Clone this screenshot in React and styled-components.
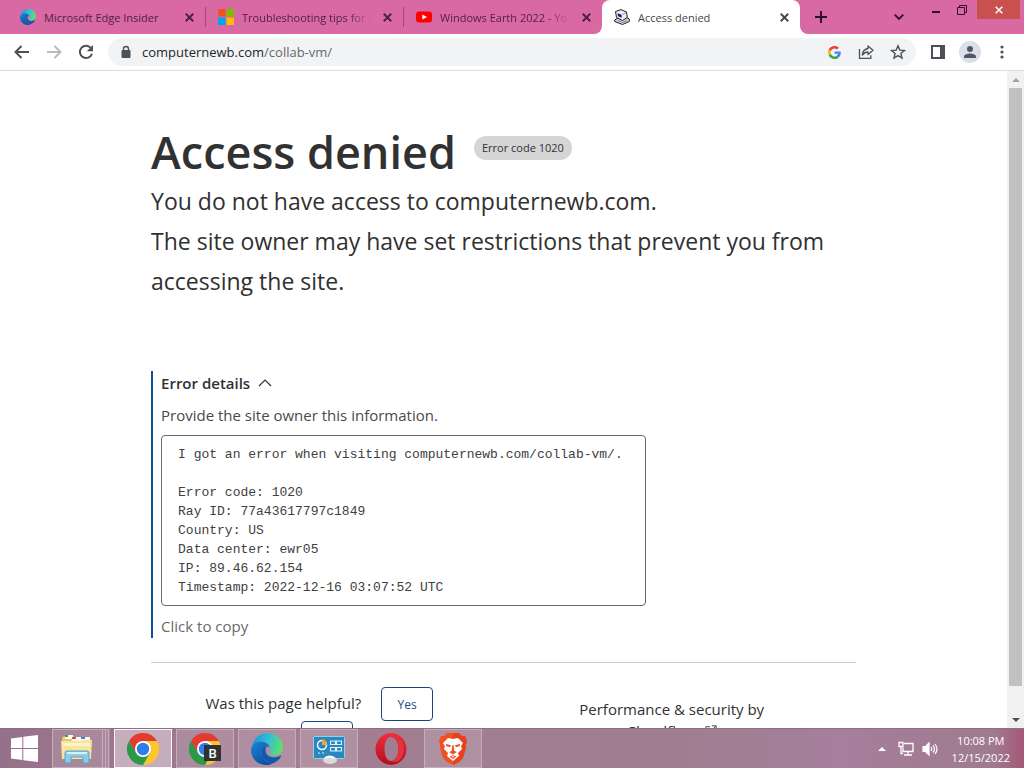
import React from "react";
import styled, { createGlobalStyle } from "styled-components";

const GlobalStyle = createGlobalStyle`
  * {
    box-sizing: border-box;
  }
  body {
    margin: 0;
    font-family: "Open Sans", "Noto Sans", sans-serif;
    color: #313131;
    background: #fff;
  }
  button {
    font: inherit;
    color: inherit;
    border: 0;
    padding: 0;
    background: none;
  }
  svg {
    display: block;
    flex: none;
  }
`;

const Desktop = styled.div`
  display: flex;
  flex-direction: column;
  height: 100vh;
  overflow: hidden;
`;

const TabStrip = styled.header`
  display: flex;
  flex: none;
  height: 34px;
  padding-left: 8px;
  background: #d869a3;
`;

const Tabs = styled.div`
  display: flex;
  flex: 0 1 792px;
  min-width: 0;
`;

const Tab = styled.div`
  display: flex;
  flex: 1;
  align-items: center;
  gap: 8px;
  min-width: 0;
  padding: 0 8px 0 12px;
  font-size: 11px;
  color: ${(p) => (p.$active ? "#45474a" : "#511f45")};
  background: ${(p) => (p.$active ? "#fff" : "#d869a3")};
  border-radius: ${(p) => (p.$active ? "8px 8px 0 0" : "0 0 8px 0")};
`;

const TabBack = styled.div`
  display: flex;
  flex: 1;
  min-width: 0;
  background: ${(p) => (p.$beforeActive ? "#fff" : "#d869a3")};
`;

const TabTitle = styled.button`
  flex: 1;
  min-width: 0;
  overflow: hidden;
  text-align: left;
  white-space: nowrap;
  mask-image: ${(p) =>
    p.$fade ? "linear-gradient(to left, transparent, #000 24px)" : "none"};
`;

const TabClose = styled.button`
  display: grid;
  place-items: center;
  width: 16px;
  height: 16px;
`;

const Divider = styled.span`
  align-self: center;
  width: 1px;
  height: 20px;
  background: #a5467e;
`;

const StripRest = styled.div`
  display: flex;
  flex: 1;
  background: #fff;
`;

const StripFill = styled.div`
  display: flex;
  flex: 1;
  justify-content: space-between;
  padding-right: 4px;
  color: #2f1029;
  background: #d869a3;
  border-radius: 0 0 0 8px;
`;

const NewTab = styled.button`
  display: grid;
  place-items: center;
  width: 42px;
`;

const WindowButtons = styled.div`
  display: flex;
  align-items: flex-start;
`;

const WindowButton = styled.button`
  display: grid;
  place-items: center;
  width: 26px;
  height: 20px;
`;

const SearchTabs = styled(WindowButton)`
  width: 48px;
  height: 34px;
`;

const CloseWindow = styled(WindowButton)`
  width: 43px;
  height: 19px;
  margin-left: 2px;
  color: #fff;
  background: #c8504f;
`;

const Toolbar = styled.nav`
  display: flex;
  flex: none;
  align-items: center;
  gap: 4px;
  height: 37px;
  padding: 0 8px;
  color: #4d5156;
  background: #fff;
  border-bottom: 1px solid #dcdcdc;
`;

const ToolButton = styled.button`
  display: grid;
  place-items: center;
  width: 28px;
  height: 28px;
  color: ${(p) => (p.$dim ? "#b9bbbd" : "inherit")};
`;

const AddressBar = styled.div`
  display: flex;
  flex: 1;
  align-items: center;
  gap: 4px;
  height: 28px;
  margin: 0 4px;
  padding: 0 4px 0 12px;
  background: #f1f3f4;
  border-radius: 14px;
`;

const Url = styled.div`
  flex: 1;
  padding-left: 6px;
  font-size: 13px;
  color: #66696d;

  b {
    font-weight: 400;
    color: #25272a;
  }
`;

const Avatar = styled.span`
  display: grid;
  place-items: center;
  width: 22px;
  height: 22px;
  border-radius: 50%;
  background: #dcdfe8;
`;

const Viewport = styled.div`
  display: flex;
  flex: 1;
  min-height: 0;
`;

const Page = styled.main`
  flex: 1;
  overflow: hidden;
`;

const Content = styled.div`
  width: 70%;
  margin: 0 auto;
  padding-top: 52px;
`;

const Heading = styled.div`
  display: flex;
  align-items: center;
  gap: 18px;
  height: 58px;
`;

const Title = styled.h1`
  margin: 0;
  font-size: 45px;
  line-height: 58px;
  font-weight: 600;
  white-space: nowrap;
`;

const Badge = styled.span`
  padding: 0 8px;
  margin-bottom: 8px;
  font-size: 11px;
  line-height: 24px;
  white-space: nowrap;
  background: #d5d5d5;
  border-radius: 12px;
`;

const Lead = styled.p`
  margin: 0;
  font-size: 23px;
  line-height: 40px;
`;

const Details = styled.section`
  margin-top: 70px;
  padding-left: 8px;
  border-left: 2px solid #0b5394;
`;

const Summary = styled.button`
  display: flex;
  align-items: center;
  gap: 8px;
  font-size: 15px;
  line-height: 24px;
  font-weight: 600;
`;

const Hint = styled.p`
  margin: 8px 0;
  font-size: 15px;
  line-height: 24px;
  color: #4a4a4a;
`;

const Report = styled.pre`
  width: fit-content;
  min-width: 485px;
  margin: 0 0 8px;
  padding: 9px 16px 8px;
  font-family: "Liberation Mono", monospace;
  font-size: 13px;
  line-height: 19px;
  color: #404040;
  border: 1px solid #6b6b6b;
  border-radius: 4px;
`;

const CopyButton = styled.button`
  display: block;
  font-size: 15px;
  line-height: 24px;
  color: #6a6a6a;
`;

const Footer = styled.footer`
  display: grid;
  grid-template-columns: 1fr 1fr;
  margin-top: 24px;
  padding-top: 24px;
  font-size: 15px;
  border-top: 1px solid #cfcfcf;
`;

const Feedback = styled.div`
  text-align: center;
  padding: 0 64px 0 48px;
`;

const Answer = styled.button`
  width: 52px;
  height: 34px;
  margin-left: 16px;
  font-size: 12px;
  color: #1d4a86;
  border: 1px solid #1c4382;
  border-radius: 4px;
`;

const Credit = styled.div`
  padding: 11px 16px 0 0;
  line-height: 22px;
  text-align: center;
`;

const CreditLink = styled.a`
  display: flex;
  justify-content: center;
  align-items: center;
  gap: 6px;
  color: inherit;
  text-decoration: none;
`;

const Scrollbar = styled.div`
  display: flex;
  flex-direction: column;
  flex: none;
  align-items: center;
  width: 17px;
  background: #f1f1f1;
`;

const ScrollArrow = styled.button`
  display: grid;
  place-items: center;
  flex: none;
  width: 17px;
  height: 17px;
  color: ${(p) => (p.$dim ? "#a3a3a3" : "#505050")};
`;

const ScrollTrack = styled.div`
  flex: 1;
  width: 13px;
`;

const ScrollThumb = styled.div`
  height: 96%;
  background: #c1c1c1;
`;

const Taskbar = styled.footer`
  display: flex;
  flex: none;
  height: 40px;
  background: linear-gradient(90deg, #96718a, #a37e92 30%, #a07e90 65%, #a57f9c 82%, #a07a8e 97%, #a45878);
  border-top: 1px solid #8d7080;
`;

const StartButton = styled.button`
  display: grid;
  place-items: center;
  width: 48px;
`;

const Apps = styled.div`
  display: flex;
  gap: 4px;
  flex: 1;
  padding-left: 4px;
`;

const AppButton = styled.button`
  display: grid;
  place-items: center;
  width: 58px;
  background: ${(p) =>
    p.$state === "active"
      ? "#c5aebc"
      : p.$state === "idle"
        ? "none"
        : "rgba(255, 255, 255, 0.14)"};
  border: 1px solid
    ${(p) =>
      p.$state === "active"
        ? "#fbf4f8"
        : p.$state === "idle"
          ? "transparent"
          : "#c6adbb"};
`;

const StackedApp = styled(AppButton)`
  padding-right: 8px;
  background:
    linear-gradient(#c6adbb, #c6adbb) right 0 top / 1px 100% no-repeat,
    linear-gradient(#c6adbb, #c6adbb) right 3px top / 1px 100% no-repeat,
    linear-gradient(#c6adbb, #c6adbb) right 6px top / 1px 100% no-repeat,
    rgba(255, 255, 255, 0.14);
  border-right-color: transparent;
`;

const Tray = styled.div`
  display: flex;
  align-items: center;
  gap: 8px;
  padding-right: 14px;
  color: #fff;
`;

const TrayButton = styled.button`
  display: grid;
  place-items: center;
`;

const HiddenIcons = styled(TrayButton)`
  width: 16px;
`;

const Clock = styled.time`
  margin-left: 6px;
  font-size: 11px;
  line-height: 17px;
  text-align: center;
`;

const Cross = ({ size = 8, width = 2 }) => (
  <svg width={size} height={size} viewBox="0 0 8 8">
    <path d="M.7.7l6.6 6.6M7.3.7L.7 7.3" stroke="currentColor" strokeWidth={width} fill="none" />
  </svg>
);

const EdgeLogo = ({ size, id }) => (
  <svg width={size} height={size} viewBox="0 0 32 32">
    <defs>
      <linearGradient id={`${id}-top`} x1="0" y1="0.3" x2="1" y2="0.5">
        <stop offset="0" stopColor="#1794dc" />
        <stop offset="0.5" stopColor="#2fc0d4" />
        <stop offset="1" stopColor="#62df6c" />
      </linearGradient>
      <linearGradient id={`${id}-low`} x1="0" y1="0" x2="0.8" y2="1">
        <stop offset="0" stopColor="#1a85d8" />
        <stop offset="1" stopColor="#0b4a9c" />
      </linearGradient>
    </defs>
    <path d="M1 13C3 5 9 0 16.500 0 26 0 32 7 32 14c0 5-3.500 8.500-8.500 8.500-3 0-5-1.500-5-3 0-1 1-1.500 1-4 0-4-5-7-10-7C5.500 8.500 2.500 10.500 1 13z" fill={`url(#${id}-top)`} />
    <path d="M0 17C0 12 4.500 8.500 9.500 8.500c5 0 9 3 9 6.500-1-1.500-2.500-2-4-1.500-3 1-4.500 4-4 7.500.6 5 5 9 11 9.500-2 1-4 1.500-6 1.500C6.500 32 0 25.500 0 17z" fill={`url(#${id}-low)`} />
    <path d="M14.500 13.500c-3 1-4.500 4-4 7.500.6 5 5 9 11 9.500 4-1.500 7-4 8.500-7 .3-.8-.3-1.200-1-.8-6 3.300-14.500 1.300-14.500-5.700 0-1.500.5-2.500 1.500-3.300-.5-.3-1-.4-1.500-.2z" fill="#1059ae" />
  </svg>
);

const MicrosoftLogo = () => (
  <svg width="16" height="16" viewBox="0 0 16 16">
    <path fill="#f25022" d="M0 0h7.500v7.500H0z" />
    <path fill="#7fba00" d="M8.500 0H16v7.500H8.500z" />
    <path fill="#00a4ef" d="M0 8.500h7.500V16H0z" />
    <path fill="#ffb900" d="M8.500 8.500H16V16H8.500z" />
  </svg>
);

const YoutubeLogo = () => (
  <svg width="16" height="16" viewBox="0 0 16 16">
    <rect y="2.500" width="16" height="11" rx="3" fill="#f00" />
    <path d="M6.300 5.500v5L11 8z" fill="#fff" />
  </svg>
);

const ComputerIcon = () => (
  <svg width="16" height="16" viewBox="0 0 16 16" strokeLinejoin="round">
    <path d="M.700 11L4 9l8-1 3.300 2v2.500L8.500 15.500 .7 12.500z" fill="#d4d4d4" stroke="#222" />
    <path d="M1.500 2.500L7 .6l5.500 2.400.8 5.500L8.500 11.500 2.500 8.500z" fill="#ececec" stroke="#222" />
    <path d="M3.500 4.300l4 1.500.3 3L4 7.200z" fill="#161690" />
    <path d="M8.500 5.500L12.300 3.300M4 11.500l4.500 2 4.500-2" fill="none" stroke="#666" strokeWidth=".7" />
  </svg>
);

const BackArrow = ({ flip }) => (
  <svg width="16" height="16" viewBox="0 0 16 16">
    <path
      d={flip ? "M1 8h13M8.500 2L14.500 8l-6 6" : "M15 8H2M7.500 2L1.500 8l6 6"}
      fill="none"
      stroke="currentColor"
      strokeWidth="2"
    />
  </svg>
);

const ReloadIcon = () => (
  <svg width="16" height="16" viewBox="0 0 16 16">
    <path d="M13.200 4.300A6.200 6.200 0 1 0 14 9.800" fill="none" stroke="currentColor" strokeWidth="2" />
    <path d="M15 1v6.200H8.800z" fill="currentColor" />
  </svg>
);

const LockIcon = () => (
  <svg width="12" height="14" viewBox="0 0 12 14">
    <rect x="1.500" y="5" width="9" height="8" rx="1" fill="#4d5156" />
    <path d="M3.500 6V4a2.500 2.500 0 0 1 5 0v2" fill="none" stroke="#4d5156" strokeWidth="1.400" />
  </svg>
);

const GoogleIcon = () => (
  <svg width="13" height="13" viewBox="0 0 48 48">
    <path fill="#ea4335" d="M24 9.500c3.500 0 6.700 1.200 9.200 3.600l6.900-6.900C35.900 2.400 30.500 0 24 0 14.600 0 6.500 5.400 2.600 13.200l8 6.200C12.400 13.700 17.700 9.500 24 9.500z" />
    <path fill="#4285f4" d="M47 24.600c0-1.600-.2-3.100-.4-4.600H24v9h12.900c-.6 3-2.300 5.500-4.800 7.200l7.700 6C44.400 38 47 31.800 47 24.600z" />
    <path fill="#fbbc05" d="M10.500 28.600a14.500 14.500 0 0 1 0-9.200l-8-6.200a24 24 0 0 0 0 21.600z" />
    <path fill="#34a853" d="M24 48c6.500 0 11.900-2.100 15.900-5.800l-7.700-6A14.300 14.300 0 0 1 10.500 28.600l-8 6.200C6.500 42.600 14.600 48 24 48z" />
  </svg>
);

const ShareIcon = () => (
  <svg width="16" height="16" viewBox="0 0 16 16" fill="none" stroke="currentColor" strokeWidth="1.300">
    <path d="M1.500 5v9.300h11.300v-3" />
    <path d="M10 2l5 4.300-5 4.200V8C7.500 8 5.800 9 4.300 11c.4-3.700 2.400-6 5.700-6.500z" strokeLinejoin="round" />
  </svg>
);

const StarIcon = () => (
  <svg width="16" height="16" viewBox="0 0 16 16">
    <path d="M8 1.800l1.800 4.300 4.700.4-3.600 3 1.100 4.600L8 11.600l-4 2.500 1.100-4.600-3.600-3 4.700-.4z" fill="none" stroke="currentColor" strokeWidth="1.400" />
  </svg>
);

const SidePanelIcon = () => (
  <svg width="14" height="14" viewBox="0 0 14 14">
    <path d="M1 1h12v12H1z" fill="none" stroke="currentColor" strokeWidth="2" />
    <path d="M9 1h4v12H9z" fill="currentColor" />
  </svg>
);

const PersonIcon = () => (
  <svg width="12" height="12" viewBox="0 0 12 12" fill="#4f5965">
    <circle cx="6" cy="3" r="3" />
    <path d="M0 12v-1.500C0 8.500 3.500 7.500 6 7.500s6 1 6 3V12z" />
  </svg>
);

const MenuIcon = () => (
  <svg width="4" height="14" viewBox="0 0 4 14" fill="currentColor">
    <circle cx="2" cy="2" r="1.600" />
    <circle cx="2" cy="7" r="1.600" />
    <circle cx="2" cy="12" r="1.600" />
  </svg>
);

const ExternalIcon = () => (
  <svg width="12" height="12" viewBox="0 0 14 14" fill="none" stroke="currentColor">
    <path d="M6 2H1v11h11V8M8 1h5v5M13 1L6 8" />
  </svg>
);

const Triangle = ({ down, size = 8 }) => (
  <svg width={size} height={size / 2} viewBox="0 0 8 4" fill="currentColor">
    <path d={down ? "M0 0h8L4 4z" : "M0 4h8L4 0z"} />
  </svg>
);

const WindowsLogo = () => (
  <svg width="27" height="27" viewBox="0 0 27 27" fill="#fff">
    <path d="M0 3.500L11.300 2v11H0zM12.300 1.800L27 0v13H12.300zM0 14h11.300v11L0 23.500zM12.300 14H27v13l-14.700-1.800z" />
  </svg>
);

const FolderIcon = () => (
  <svg width="32" height="32" viewBox="0 0 32 32">
    <path d="M1 5l2-2h9l2 2h3l2-1h9l2 3v18H1z" fill="#e9c866" />
    <path d="M4 2h8v4H4z" fill="#fbfbf4" />
    <path d="M4 2h3v2H4z" fill="#3d9a53" />
    <path d="M11 4h9v4h-9z" fill="#fbfbf4" />
    <path d="M11 4h4v2h-4z" fill="#d0563c" />
    <path d="M20 4h9v4h-9z" fill="#fbfbf4" />
    <path d="M20 4h4v2h-4z" fill="#3c86cf" />
    <path d="M0 8h20l2-1h9l-1 19H1z" fill="#f8e59b" />
    <path d="M2 10h27v3H2z" fill="#fdf3c4" />
    <path d="M4 30V20q0-2 2-2h20q2 0 2 2v10h-6v-6H10v6z" fill="#8fcbe8" stroke="#57a3c9" />
    <path d="M6 20h20" stroke="#d6f0fb" strokeWidth="2" />
  </svg>
);

const ChromeLogo = ({ badge }) => (
  <svg width="32" height="32" viewBox="0 0 32 32">
    <path d="M16 8h13.860A16 16 0 0 1 16 32l6.900-12z" fill="#fcc62d" />
    <path d="M2.140 8A16 16 0 0 0 16 32l6.900-12L16 16 9.100 20z" fill="#2b9a48" />
    <path d="M2.140 8L9.100 20 16 16V8h13.860A16 16 0 0 0 2.140 8z" fill="#e33b2e" />
    <circle cx="16" cy="16" r="8" fill="#fff" />
    <circle cx="16" cy="16" r="6.200" fill="#2f7de8" />
    {badge && <path d="M15 12h17v16H15z" fill="#303133" />}
    {badge && (
      <text x="23.500" y="25" textAnchor="middle" fontSize="13" fontWeight="600" fill="#fff">
        B
      </text>
    )}
  </svg>
);

const ControlPanelIcon = () => (
  <svg width="32" height="32" viewBox="0 0 32 32">
    <rect x=".5" y="3.500" width="31" height="22" rx="1" fill="#2a87bf" stroke="#8ed0ee" />
    <circle cx="9" cy="12" r="4.500" fill="#2a87bf" stroke="#fff" strokeWidth="1.500" />
    <path d="M9 12V6a6 6 0 0 1 5 6z" fill="#f2a33a" />
    <g fill="none" stroke="#d9f1fb" strokeWidth="1.200">
      <path d="M17.500 8h5v3.500h-5zM23.500 8h5v3.500h-5zM17.500 14.500h5V18h-5zM23.500 14.500h5V18h-5z" />
      <path d="M5 20h2M9 20h2" />
    </g>
    <ellipse cx="17" cy="27" rx="7" ry="4" fill="#d9dbdf" />
    <path d="M12 25q5-3 9 0" fill="none" stroke="#fff" strokeWidth="2" />
  </svg>
);

const OperaLogo = () => (
  <svg width="32" height="32" viewBox="0 0 32 32">
    <defs>
      <linearGradient id="opera" x1="0" y1="0" x2="0" y2="1">
        <stop offset="0" stopColor="#f0303c" />
        <stop offset="1" stopColor="#b30d1f" />
      </linearGradient>
    </defs>
    <path
      fillRule="evenodd"
      fill="url(#opera)"
      d="M16 0a15.500 16 0 1 1 0 32 15.500 16 0 1 1 0-32zM16 4c-4 0-6.500 5.500-6.500 12S12 28 16 28s7.500-5.500 7.500-12S20 4 16 4z"
    />
    <path d="M16 4c3-1.800 6.500-1.200 9 1.200 5 4.500 5.500 16 0 21.600-2.500 2.400-6 3-9 1.200 4 0 7.500-5.500 7.500-12S20 4 16 4z" fill="#e23240" />
  </svg>
);

const BraveLogo = () => (
  <svg width="28" height="32" viewBox="0 0 28 32">
    <path d="M8 0h12l3 3h3l2 5-1 3 0 4-3 10-4 4-6 3-6-3-4-4L1 15v-4L0 8l2-5h3z" fill="#f2501f" />
    <path d="M14 0h6l3 3h3l2 5-1 3v4l-3 10-4 4-6 3z" fill="#e8421c" />
    <path d="M9 5l5 1 5-1 5 5-2 3 1 3-4 4 1 3-6 5-6-5 1-3-4-4 1-3-2-3z" fill="#fff" />
    <path d="M7 11l5 1.200-1 2-4-1.200zM21 11l-5 1.200 1 2 4-1.200zM13.400 12h1.200l.8 6 2.600 1-4 2.500-4-2.500 2.600-1zM10.500 23.500l3.500-1.300 3.500 1.300L14 26z" fill="#f2501f" />
    <path d="M14 23l1.500.6-1.500 1-1.500-1z" fill="#fff" />
  </svg>
);

const NetworkIcon = () => (
  <svg width="16" height="16" viewBox="0 0 16 16" fill="none" stroke="currentColor" strokeWidth="1.300">
    <path d="M6 2.500h9v8H5v-4M10 10.500v3M6 14h8" />
    <path d="M1 1.500h4v4H1zM3 5.500v7h2" />
  </svg>
);

const SpeakerIcon = () => (
  <svg width="16" height="16" viewBox="0 0 16 16" fill="none" stroke="currentColor" strokeWidth="1.200">
    <path d="M1 5.500h2.500L7 2v12l-3.500-3.500H1z" fill="currentColor" />
    <path d="M9 6q1.500 2 0 4M11 4.500q3 3.500 0 7M13 3q4 5 0 10" />
  </svg>
);

const tabs = [
  { title: "Microsoft Edge Insider", icon: <EdgeLogo size={16} id="tab-edge" />, divider: true },
  { title: "Troubleshooting tips for a", icon: <MicrosoftLogo />, fade: true, divider: true },
  { title: "Windows Earth 2022 - Yo", icon: <YoutubeLogo />, fade: true },
  { title: "Access denied", icon: <ComputerIcon />, active: true },
];

const report = `I got an error when visiting computernewb.com/collab-vm/.

Error code: 1020
Ray ID: 77a43617797c1849
Country: US
Data center: ewr05
IP: 89.46.62.154
Timestamp: 2022-12-16 03:07:52 UTC`;

const Browser = () => (
  <>
    <TabStrip>
      <Tabs>
        {tabs.map((tab, i) => (
          <TabBack key={tab.title} $beforeActive={tabs[i + 1]?.active}>
            <Tab $active={tab.active}>
              {tab.icon}
              <TabTitle $fade={tab.fade}>{tab.title}</TabTitle>
              <TabClose aria-label={`Close ${tab.title}`}>
                <Cross size={9} width={1.7} />
              </TabClose>
            </Tab>
            {tab.divider && <Divider />}
          </TabBack>
        ))}
      </Tabs>
      <StripRest>
        <StripFill>
          <NewTab aria-label="New tab">
            <svg width="12" height="12" viewBox="0 0 12 12">
              <path d="M6 0v12M0 6h12" stroke="currentColor" strokeWidth="2" />
            </svg>
          </NewTab>
          <WindowButtons>
            <SearchTabs aria-label="Search tabs">
              <svg width="10" height="6" viewBox="0 0 10 6">
                <path d="M.7.7L5 5 9.300.7" fill="none" stroke="currentColor" strokeWidth="1.800" />
              </svg>
            </SearchTabs>
            <WindowButton aria-label="Minimize">
              <svg width="8" height="12" viewBox="0 0 8 12">
                <path d="M0 8h8" stroke="currentColor" strokeWidth="2" />
              </svg>
            </WindowButton>
            <WindowButton aria-label="Restore">
              <svg width="10" height="10" viewBox="0 0 10 10" fill="none" stroke="currentColor">
                <path d="M.5 2.500h7v7h-7zM2.500 2.500v-2h7v7h-2" />
              </svg>
            </WindowButton>
            <CloseWindow aria-label="Close">
              <Cross size={8} width={1.5} />
            </CloseWindow>
          </WindowButtons>
        </StripFill>
      </StripRest>
    </TabStrip>
    <Toolbar>
      <ToolButton aria-label="Back">
        <BackArrow />
      </ToolButton>
      <ToolButton aria-label="Forward" $dim>
        <BackArrow flip />
      </ToolButton>
      <ToolButton aria-label="Reload">
        <ReloadIcon />
      </ToolButton>
      <AddressBar>
        <LockIcon />
        <Url>
          <b>computernewb.com</b>/collab-vm/
        </Url>
        <ToolButton aria-label="Search with Google">
          <GoogleIcon />
        </ToolButton>
        <ToolButton aria-label="Share">
          <ShareIcon />
        </ToolButton>
        <ToolButton aria-label="Bookmark">
          <StarIcon />
        </ToolButton>
      </AddressBar>
      <ToolButton aria-label="Side panel">
        <SidePanelIcon />
      </ToolButton>
      <ToolButton aria-label="Profile">
        <Avatar>
          <PersonIcon />
        </Avatar>
      </ToolButton>
      <ToolButton aria-label="Menu">
        <MenuIcon />
      </ToolButton>
    </Toolbar>
  </>
);

const ErrorPage = () => (
  <Viewport>
    <Page>
      <Content>
        <Heading>
          <Title>Access denied</Title>
          <Badge>Error code 1020</Badge>
        </Heading>
        <Lead>You do not have access to computernewb.com.</Lead>
        <Lead>
          The site owner may have set restrictions that prevent you from
          accessing the site.
        </Lead>
        <Details>
          <Summary aria-expanded="true">
            Error details
            <svg width="14" height="8" viewBox="0 0 14 8">
              <path d="M1 7l6-6 6 6" fill="none" stroke="currentColor" strokeWidth="1.200" />
            </svg>
          </Summary>
          <Hint>Provide the site owner this information.</Hint>
          <Report>{report}</Report>
          <CopyButton>Click to copy</CopyButton>
        </Details>
        <Footer>
          <Feedback>
            Was this page helpful? <Answer>Yes</Answer> <Answer>No</Answer>
          </Feedback>
          <Credit>
            Performance &amp; security by
            <CreditLink href="#cloudflare">
              Cloudflare
              <ExternalIcon />
            </CreditLink>
          </Credit>
        </Footer>
      </Content>
    </Page>
    <Scrollbar>
      <ScrollArrow aria-label="Scroll up" $dim>
        <Triangle />
      </ScrollArrow>
      <ScrollTrack>
        <ScrollThumb />
      </ScrollTrack>
      <ScrollArrow aria-label="Scroll down">
        <Triangle down />
      </ScrollArrow>
    </Scrollbar>
  </Viewport>
);

export default function App() {
  return (
    <Desktop>
      <GlobalStyle />
      <Browser />
      <ErrorPage />
      <Taskbar>
        <StartButton aria-label="Start">
          <WindowsLogo />
        </StartButton>
        <Apps>
          <StackedApp aria-label="File Explorer">
            <FolderIcon />
          </StackedApp>
          <AppButton aria-label="Chrome" $state="active">
            <ChromeLogo />
          </AppButton>
          <AppButton aria-label="Chrome, profile B">
            <ChromeLogo badge />
          </AppButton>
          <AppButton aria-label="Edge">
            <EdgeLogo size={32} id="task-edge" />
          </AppButton>
          <AppButton aria-label="Control Panel">
            <ControlPanelIcon />
          </AppButton>
          <AppButton aria-label="Opera" $state="idle">
            <OperaLogo />
          </AppButton>
          <AppButton aria-label="Brave">
            <BraveLogo />
          </AppButton>
        </Apps>
        <Tray>
          <HiddenIcons aria-label="Show hidden icons">
            <Triangle />
          </HiddenIcons>
          <TrayButton aria-label="Network">
            <NetworkIcon />
          </TrayButton>
          <TrayButton aria-label="Volume">
            <SpeakerIcon />
          </TrayButton>
          <Clock>
            10:08 PM
            <br />
            12/15/2022
          </Clock>
        </Tray>
      </Taskbar>
    </Desktop>
  );
}
